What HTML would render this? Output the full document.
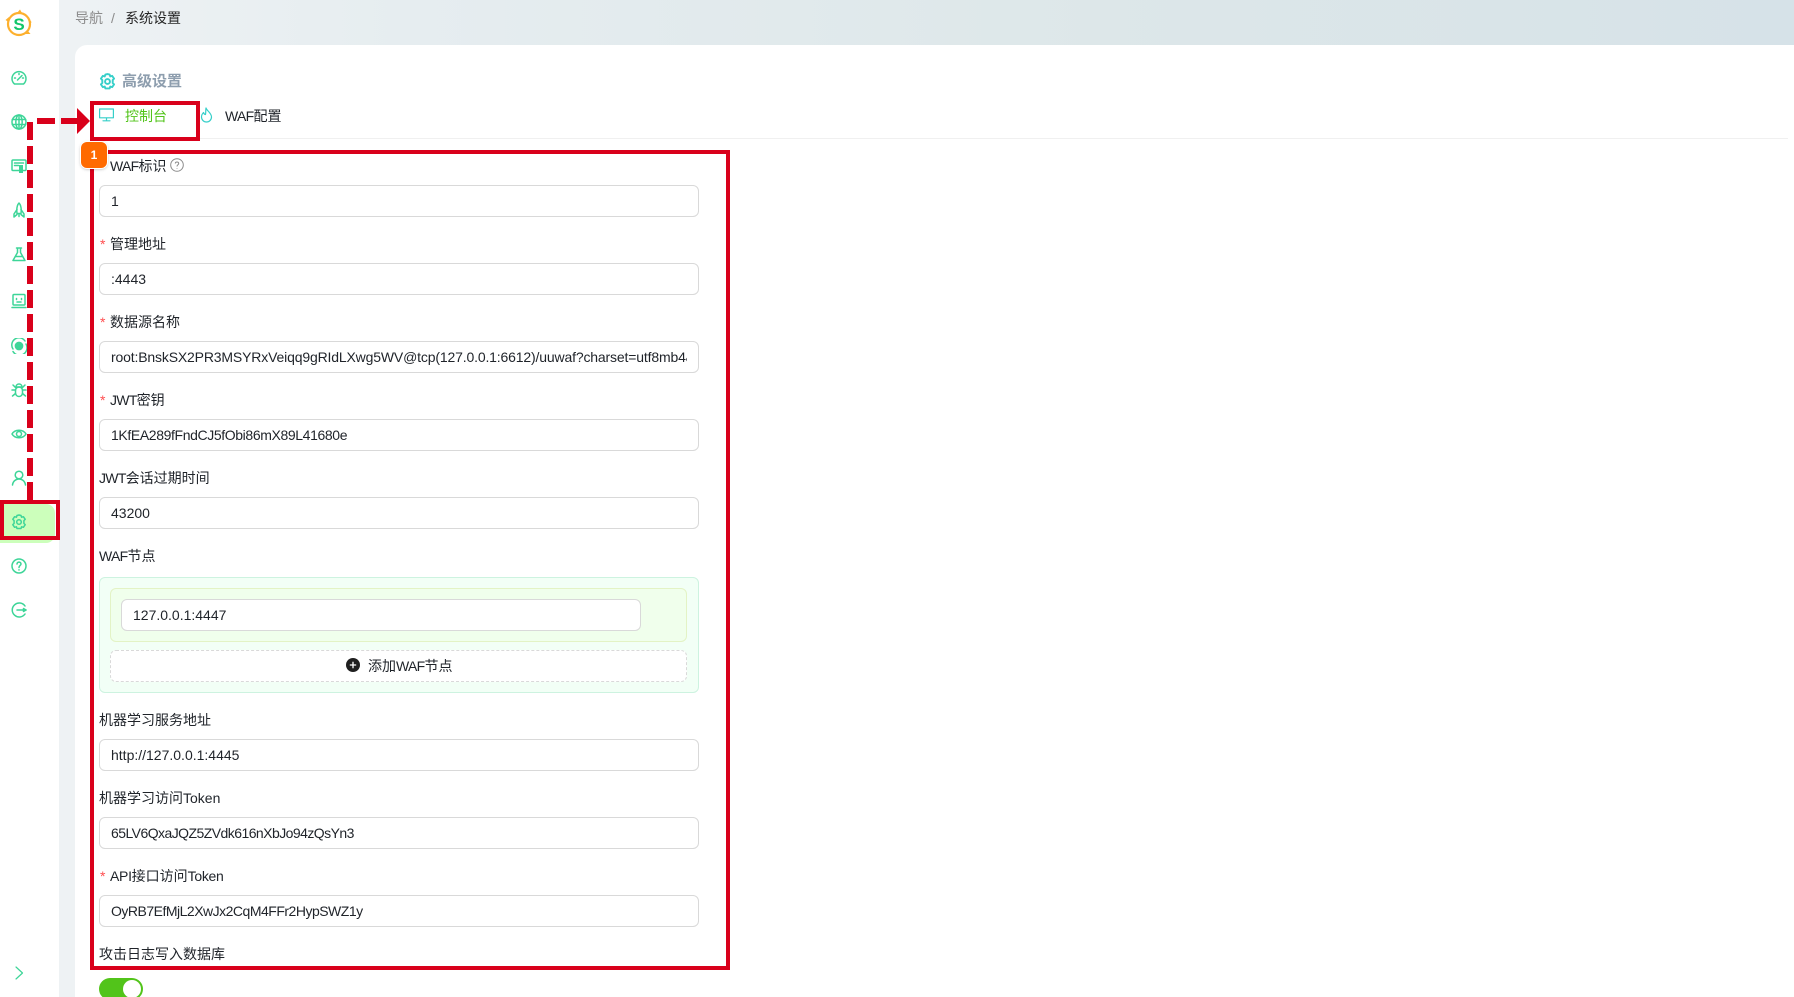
<!DOCTYPE html>
<html><head><meta charset="utf-8"><style>
html,body{margin:0;padding:0;width:1794px;height:997px;overflow:hidden;background:#fff}
body{position:relative;font-family:"Liberation Sans","Noto Sans CJK SC",sans-serif;font-size:14px;color:#1f2329}
.a{position:absolute}
.bg{left:59px;top:0;width:1735px;height:997px;background:linear-gradient(90deg,#eef2f4 0%,#e6edf0 20%,#dde7e9 60%,#d6e2e8 100%)}
.side{left:0;top:0;width:59px;height:997px;background:#fff}
.card{left:75px;top:45px;width:1719px;height:952px;background:#fff;border-top-left-radius:12px}
.lb{position:absolute;white-space:nowrap;height:22px;line-height:22px}
.lb i{font-style:normal;letter-spacing:-.7px}
.st{position:absolute;color:#ff4d4f;left:100px;font-size:14px;line-height:22px;height:22px}
.in{position:absolute;left:99px;width:598px;height:30px;border:1px solid #d9d9d9;border-radius:6px;background:#fff;line-height:30px;padding:0;white-space:nowrap;overflow:hidden}
.in span{position:absolute;left:11px;right:11px;overflow:hidden;white-space:nowrap}
.ic{position:absolute;fill:none;stroke:#3dd598;stroke-width:1.5;stroke-linecap:round;stroke-linejoin:round}
.r{position:absolute;background:#d9001b}
.box{position:absolute;border:4px solid #d9001b;box-sizing:border-box}
</style></head><body>
<div class="a bg"></div>
<div class="a side"></div>
<div class="a card"></div>

<div class="a" style="left:0;top:504px;width:55px;height:39px;background:#ccffbb;border-radius:0 9px 9px 0"></div>

<!-- logo -->
<svg class="a" style="left:4px;top:9px" width="30" height="30" viewBox="0 0 30 30">
<circle cx="15" cy="15" r="11" fill="#fff" stroke="#fdb02e" stroke-width="2.2"/>
<path d="M13 4 L16 0.5 L18 4Z M25 10 L27.5 13 L26 16Z M24 22 L26.5 25 L21 25Z M5 8 L1.5 11 L4.5 13Z" fill="#fdb02e"/>
<text x="15" y="21" font-size="17" font-weight="700" fill="#12c66a" text-anchor="middle" font-family="Liberation Sans">S</text>
</svg>

<!-- sidebar icons -->
<svg class="ic" style="left:11px;top:70px" width="16" height="16" viewBox="0 0 16 16"><path d="M3.5 14 A7 7 0 1 1 12.5 14 Z"/><path d="M6.5 10 L11 5.5"/><path d="M3.5 8 h1 M8 3.5 v1 M12.5 8 h-1"/></svg>
<svg class="ic" style="left:11px;top:114px" width="16" height="16" viewBox="0 0 16 16"><circle cx="8" cy="8" r="7"/><ellipse cx="8" cy="8" rx="3.2" ry="7"/><path d="M8 1v14M1.3 5.5h13.4M1.3 10.5h13.4"/></svg>
<svg class="ic" style="left:11px;top:158px" width="16" height="16" viewBox="0 0 16 16"><rect x="1" y="2" width="14" height="10.5" rx="1"/><path d="M3.5 5h9M3.5 7.5h4"/><rect x="8" y="7" width="4" height="8" fill="#3dd598" stroke="none"/></svg>
<svg class="ic" style="left:11px;top:202px" width="16" height="16" viewBox="0 0 16 16"><path d="M8 1 C6 3 5.5 7 6 11.5 H10 C10.5 7 10 3 8 1Z"/><path d="M6 7.5 L3 12 V15 L6 12.5 M10 7.5 L13 12 V15 L10 12.5"/><path d="M8 12.5v2"/></svg>
<svg class="ic" style="left:11px;top:246px" width="16" height="16" viewBox="0 0 16 16"><path d="M5.5 2h5M6.5 2v4.5L2 14.5H14L9.5 6.5V2"/><path d="M4.5 10.5h7"/></svg>
<svg class="ic" style="left:11px;top:293px" width="16" height="16" viewBox="0 0 16 16"><rect x="2" y="1.5" width="12" height="10.5" rx="1"/><path d="M5.5 5.5v1M10.5 5.5v1M6 9h4M1 14.5h14"/></svg>
<svg class="ic" style="left:11px;top:338px" width="16" height="16" viewBox="0 0 16 16"><path d="M14 3 A7 7 0 0 0 2 11 M2 13.5 A7 7 0 0 0 15 6"/><circle cx="8" cy="8" r="3.6" fill="#3dd598"/></svg>
<svg class="ic" style="left:11px;top:382px" width="16" height="16" viewBox="0 0 16 16"><path d="M5 5 C5 1 11 1 11 5 Z"/><rect x="4.5" y="5" width="7" height="9.5" rx="3.5"/><path d="M4.5 8H1M4.5 11.5L1.5 14M11.5 8H15M11.5 11.5L14.5 14M4.5 5.5L2 3M11.5 5.5L14 3"/></svg>
<svg class="ic" style="left:11px;top:426px" width="16" height="16" viewBox="0 0 16 16"><path d="M1 8 C4 3 12 3 15 8 C12 13 4 13 1 8Z"/><circle cx="8" cy="8" r="2.5"/></svg>
<svg class="ic" style="left:11px;top:470px" width="16" height="16" viewBox="0 0 16 16"><circle cx="8" cy="5" r="3.8"/><path d="M1.5 15 C2 11 5 9 8 9 C11 9 14 11 14.5 15"/></svg>
<svg class="ic" style="left:11px;top:514px" width="16" height="16" viewBox="0 0 16 16"><path d="M8 1 L10 1.5 L10.6 3.2 L12.4 2.7 L14.2 5.3 L12.9 6.6 L12.9 9.4 L14.2 10.7 L12.4 13.3 L10.6 12.8 L10 14.5 L6 14.5 L5.4 12.8 L3.6 13.3 L1.8 10.7 L3.1 9.4 L3.1 6.6 L1.8 5.3 L3.6 2.7 L5.4 3.2 L6 1.5Z"/><circle cx="8" cy="8" r="2.3"/></svg>
<svg class="ic" style="left:11px;top:558px" width="16" height="16" viewBox="0 0 16 16"><circle cx="8" cy="8" r="7"/><path d="M6 6 C6 3.5 10 3.5 10 6 C10 7.5 8 7.5 8 9.5"/><path d="M8 11.7v.3"/></svg>
<svg class="ic" style="left:11px;top:602px" width="16" height="16" viewBox="0 0 16 16"><path d="M14 4 A7 7 0 1 0 14 12"/><path d="M6 8H15"/><path d="M12.5 6.5 L15 8 L12.5 9.5Z" fill="#3dd598"/></svg>
<svg class="ic" style="left:13px;top:966px" width="12" height="14" viewBox="0 0 12 14"><path d="M3 1 L9.5 7 L3 13" stroke-width="1.2"/></svg>

<!-- breadcrumb -->
<div class="lb" style="left:75px;top:7px;color:#8c8c8c">导航</div>
<div class="lb" style="left:111px;top:7px;color:#8c8c8c">/</div>
<div class="lb" style="left:125px;top:7px;color:#262626">系统设置</div>

<!-- title -->
<svg class="ic" style="left:99px;top:73px;stroke:#36cfc9;stroke-width:1.8" width="17" height="17" viewBox="0 0 16 16"><path d="M8 1 L10 1.5 L10.6 3.2 L12.4 2.7 L14.2 5.3 L12.9 6.6 L12.9 9.4 L14.2 10.7 L12.4 13.3 L10.6 12.8 L10 14.5 L6 14.5 L5.4 12.8 L3.6 13.3 L1.8 10.7 L3.1 9.4 L3.1 6.6 L1.8 5.3 L3.6 2.7 L5.4 3.2 L6 1.5Z"/><circle cx="8" cy="8" r="2.3"/></svg>
<div class="lb" style="left:122px;top:71px;color:#8e9eae;font-weight:700;font-size:15px">高级设置</div>

<!-- tabs -->
<svg class="ic" style="left:99px;top:108px;stroke:#36cfc9;stroke-width:1.2" width="15" height="14" viewBox="0 0 15 14"><rect x="0.6" y="1" width="13.8" height="8.8"/><path d="M7.5 10v2.5M4 12.8h7"/></svg>
<div class="lb" style="left:125px;top:105px;color:#52c41a">控制台</div>
<svg class="ic" style="left:200px;top:107px;stroke:#36cfc9;stroke-width:1.2" width="13" height="16" viewBox="0 0 13 16"><path d="M6 1 C7 4 11.5 6 11.5 10 A5 5 0 0 1 1.5 10 C1.5 8 2.5 6.5 3.5 5.5 C4 7 5 7.5 5.5 7.5 C6 5 5.5 3 6 1Z"/></svg>
<div class="lb" style="left:225px;top:105px;color:#1f2329"><i>WAF</i>配置</div>
<div class="a" style="left:94px;top:137.5px;width:1694px;height:1px;background:#f0f0f0"></div>

<!-- form -->
<div class="lb" style="left:110px;top:155px"><i>WAF</i>标识</div>
<svg class="a" style="left:170px;top:158px" width="14" height="14" viewBox="0 0 14 14" fill="none" stroke="#8c8c8c" stroke-width="1"><circle cx="7" cy="7" r="6.3"/><path d="M5.3 5.5 C5.3 3.5 8.7 3.5 8.7 5.5 C8.7 6.8 7 6.8 7 8.5M7 10v.6"/></svg>
<div class="in" style="top:185px"><span>1</span></div>

<div class="st" style="top:233px">*</div><div class="lb" style="left:110px;top:233px">管理地址</div>
<div class="in" style="top:263px"><span>:4443</span></div>

<div class="st" style="top:311px">*</div><div class="lb" style="left:110px;top:311px">数据源名称</div>
<div class="in" style="top:341px"><span style="letter-spacing:-.16px">root:BnskSX2PR3MSYRxVeiqq9gRIdLXwg5WV@tcp(127.0.0.1:6612)/uuwaf?charset=utf8mb4&amp;parseTime=true</span></div>

<div class="st" style="top:389px">*</div><div class="lb" style="left:110px;top:389px"><i>JWT</i>密钥</div>
<div class="in" style="top:419px"><span style="letter-spacing:-.38px">1KfEA289fFndCJ5fObi86mX89L41680e</span></div>

<div class="lb" style="left:99px;top:467px"><i>JWT</i>会话过期时间</div>
<div class="in" style="top:497px"><span>43200</span></div>

<div class="lb" style="left:99px;top:545px"><i>WAF</i>节点</div>
<div class="a" style="left:99px;top:577px;width:598px;height:114px;border:1px solid #cdf3e0;border-radius:6px;background:#f2fff6"></div>
<div class="a" style="left:110px;top:588px;width:575px;height:52px;border:1px solid #e3f3c5;border-radius:6px;background:#f0ffec"></div>
<div class="in" style="left:121px;top:599px;width:518px"><span>127.0.0.1:4447</span></div>
<div class="a" style="left:110px;top:650px;width:575px;height:30px;border:1px dashed #d9d9d9;border-radius:6px;background:#fff"></div>
<svg class="a" style="left:346px;top:658px" width="14" height="14" viewBox="0 0 14 14"><circle cx="7" cy="7" r="7" fill="#1f1f1f"/><path d="M7 3.8v6.4M3.8 7h6.4" stroke="#fff" stroke-width="1.3"/></svg>
<div class="lb" style="left:368px;top:655px">添加<i>WAF</i>节点</div>

<div class="lb" style="left:99px;top:709px">机器学习服务地址</div>
<div class="in" style="top:739px"><span>http://127.0.0.1:4445</span></div>

<div class="lb" style="left:99px;top:787px">机器学习访问Token</div>
<div class="in" style="top:817px"><span style="letter-spacing:-.55px">65LV6QxaJQZ5ZVdk616nXbJo94zQsYn3</span></div>

<div class="st" style="top:865px">*</div><div class="lb" style="left:110px;top:865px"><i style="letter-spacing:-.3px">API</i>接口访问<i style="letter-spacing:-.3px">Token</i></div>
<div class="in" style="top:895px"><span style="letter-spacing:-.5px">OyRB7EfMjL2XwJx2CqM4FFr2HypSWZ1y</span></div>

<div class="lb" style="left:99px;top:943px">攻击日志写入数据库</div>
<div class="a" style="left:99px;top:978px;width:44px;height:22px;border-radius:11px;background:#52c41a"></div>
<div class="a" style="left:123px;top:980px;width:18px;height:18px;border-radius:9px;background:#fff"></div>

<!-- annotations -->
<div class="box" style="left:90px;top:150px;width:640px;height:820px"></div>
<div class="box" style="left:90px;top:101px;width:110px;height:40px"></div>
<div class="box" style="left:0;top:500px;width:60px;height:40px"></div>
<div class="r" style="left:37px;top:118px;width:18px;height:6px"></div>
<div class="r" style="left:61px;top:118px;width:16px;height:6px"></div>
<svg class="a" style="left:77px;top:108px" width="13" height="26" viewBox="0 0 13 26"><path d="M0 0 L13 13 L0 26Z" fill="#d9001b"/></svg>
<svg class="a" style="left:27px;top:120px" width="6" height="382" viewBox="0 0 6 382"><path d="M3 2V380" stroke="#d9001b" stroke-width="6" stroke-dasharray="18 6"/></svg>
<div class="a" style="left:81px;top:142px;width:26px;height:26px;background:#ff6a00;border-radius:6px;box-shadow:0 0 0 1px #fff,0 1px 3px rgba(0,0,0,.35);color:#fff;font-size:12px;font-weight:700;line-height:26px;text-align:center">1</div>
</body></html>
